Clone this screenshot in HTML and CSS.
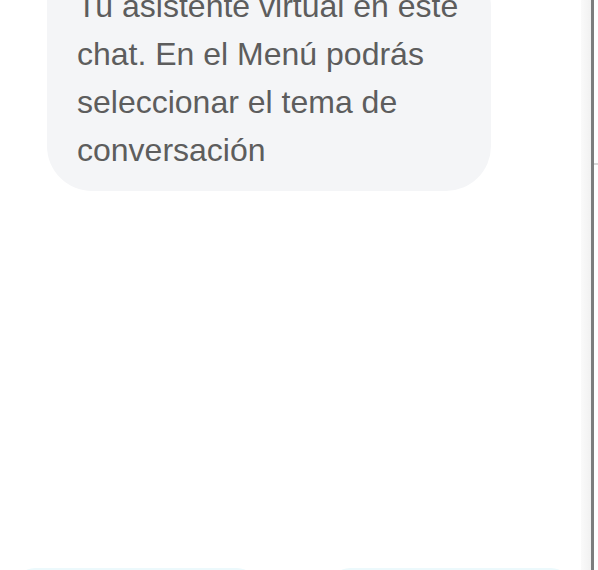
FILE: index.html
```html
<!DOCTYPE html>
<html lang="es">
  <head>
    <meta charset="UTF-8" />
    <meta name="viewport" content="width=device-width, initial-scale=1.0" />
    <title>Chat</title>
    <link rel="stylesheet" href="styles.css">
  </head>
  <body>
    <div class="window">
      <main class="chat">
        <div class="messages">
          <div class="bubble">
            Tu asistente virtual en este chat. En el Menú podrás seleccionar el tema de conversación
          </div>
        </div>

        <!-- quick reply buttons, only their top edge is in view -->
        <div class="options">
          <button type="button" class="option" aria-label="Menú"></button>
          <button type="button" class="option" aria-label="Ayuda"></button>
        </div>
      </main>

      <!-- scrollbar track of the chat panel -->
      <div class="track"></div>
      <div class="divider"></div>
      <div class="side">
        <span class="tick"></span>
      </div>
    </div>
  </body>
</html>
```

FILE: styles.css
```css
body {
  font-family: "Liberation Sans", Arial, Helvetica, sans-serif;
  background-color: #fff;
  margin: 0;
  padding: 0;
  height: 570px;
  overflow: hidden;
}

.window {
  display: flex;
  height: 100%;
}

.chat {
  flex: 1;
  display: flex;
  flex-direction: column;
  justify-content: space-between;
  min-width: 0;
}

.messages {
  padding-left: 47px;
}

.bubble {
  width: 396px;
  margin-top: -38px;
  padding: 20px 18px 17px 30px;
  background-color: #f4f5f7;
  color: #5d5d5d;
  font-size: 32px;
  line-height: 48px;
  border-radius: 20px 45px 45px 45px;
}

.options {
  display: flex;
  gap: 73px;
  padding: 0 10px 0 15px;
  margin-bottom: -40px;
}

.option {
  width: 242px;
  height: 42px;
  border: none;
  border-radius: 20px;
  background-color: #ecf9fc;
}

.track {
  width: 10px;
  background: linear-gradient(to right, #fafafa, #f1f1f1);
}

.divider {
  width: 3px;
  background-color: #7d7d7d;
}

.side {
  width: 4px;
  background-color: #fff;
}

.tick {
  display: block;
  height: 2px;
  margin-top: 163px;
  background-color: #d9d9d9;
}
```
